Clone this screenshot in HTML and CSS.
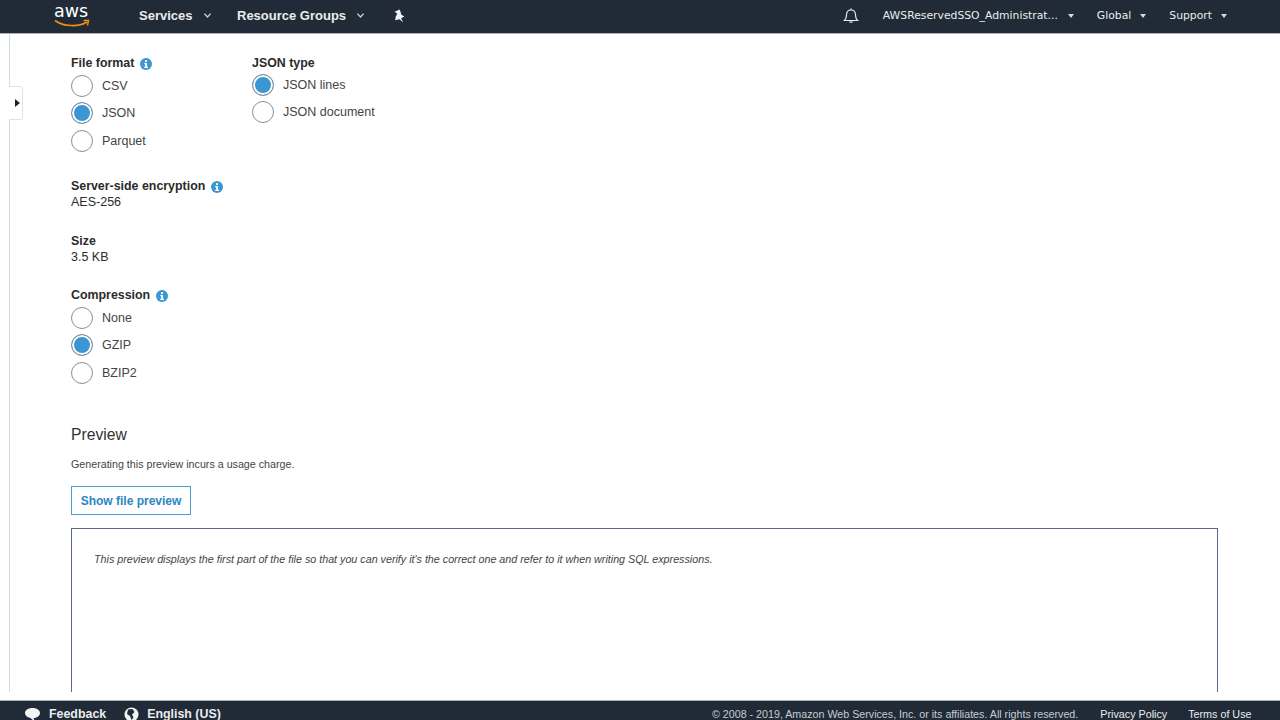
FILE: index.html
```html
<!DOCTYPE html>
<html lang="en">
<head>
<meta charset="utf-8">
<title>S3 Select</title>
<link rel="stylesheet" href="styles.css">
</head>
<body>
<header class="topbar">
  <nav class="nav-left">
    <div class="logo">
      <span class="logo-text">aws</span>
      <svg class="smile" width="36" height="9" viewBox="0 0 36 9"><path d="M1 1.500C9 7.500 24 8.500 33 3" fill="none" stroke="#f29111" stroke-width="1.600"/><path d="M29.500 1.500L34.500 1.500L33.500 6.500" fill="none" stroke="#f29111" stroke-width="1.400"/></svg>
    </div>
    <span class="nav-item nav-services">Services<svg class="caret" width="7" height="5" viewBox="0 0 7 5"><path d="M.4.7L3.500 4L6.600.7" fill="none" stroke="#c9ced3" stroke-width="1.300"/></svg></span>
    <span class="nav-item nav-groups">Resource Groups<svg class="caret" width="7" height="5" viewBox="0 0 7 5"><path d="M.4.7L3.500 4L6.600.7" fill="none" stroke="#c9ced3" stroke-width="1.300"/></svg></span>
    <svg class="pin" width="13" height="14" viewBox="0 0 12 13"><path d="M1.500 2.500L6 .5L7 2.500L7.500 5L10.500 7L7.500 8.500L9.500 12.500L6 9.500L2 10.500L2.500 7L4 4.500Z" fill="#f2f3f3"/></svg>
  </nav>
  <nav class="nav-right">
    <svg class="bell" width="16" height="16" viewBox="0 0 16 16"><path d="M1.500 12.500C3 11 3.500 9.500 3.500 7C3.500 4 5 2 8 2C11 2 12.500 4 12.500 7C12.500 9.500 13 11 14.500 12.500Z" fill="none" stroke="#eaeded" stroke-width="1.200"/><path d="M6 13.500C6.300 15.300 9.700 15.300 10 13.500Z" fill="#eaeded"/><path d="M8 .5V2" stroke="#eaeded" stroke-width="1.200"/></svg>
    <span class="nav-small account">AWSReservedSSO_Administrat...<i class="tri"></i></span>
    <span class="nav-small region">Global<i class="tri"></i></span>
    <span class="nav-small support">Support<i class="tri"></i></span>
  </nav>
</header>

<div class="body-row">
  <aside class="rail">
    <div class="rail-tab"><i class="rail-arrow"></i></div>
  </aside>
  <main class="content">
    <div class="format-row">
      <section class="format-col">
        <h4 class="label">File format <svg class="info" viewBox="0 0 12 12"><circle cx="6" cy="6" r="6" fill="#3b97d3"/><rect x="5" y="2.200" width="2" height="1.800" fill="#fff"/><path d="M4.200 5H7V8.800H8V10H4.200V8.800H5.200V6.200H4.200Z" fill="#fff"/></svg></h4>
        <div class="radio-row"><span class="radio"></span>CSV</div>
        <div class="radio-row"><span class="radio on"></span>JSON</div>
        <div class="radio-row"><span class="radio"></span>Parquet</div>
      </section>
      <section class="json-col">
        <h4 class="label">JSON type</h4>
        <div class="radio-row"><span class="radio on"></span>JSON lines</div>
        <div class="radio-row"><span class="radio"></span>JSON document</div>
      </section>
    </div>

    <section class="field sse">
      <h4 class="label">Server-side encryption <svg class="info" viewBox="0 0 12 12"><circle cx="6" cy="6" r="6" fill="#3b97d3"/><rect x="5" y="2.200" width="2" height="1.800" fill="#fff"/><path d="M4.200 5H7V8.800H8V10H4.200V8.800H5.200V6.200H4.200Z" fill="#fff"/></svg></h4>
      <p class="value">AES-256</p>
    </section>
    <section class="field size">
      <h4 class="label">Size</h4>
      <p class="value">3.5 KB</p>
    </section>
    <section class="field compression">
      <h4 class="label">Compression <svg class="info" viewBox="0 0 12 12"><circle cx="6" cy="6" r="6" fill="#3b97d3"/><rect x="5" y="2.200" width="2" height="1.800" fill="#fff"/><path d="M4.200 5H7V8.800H8V10H4.200V8.800H5.200V6.200H4.200Z" fill="#fff"/></svg></h4>
      <div class="radio-row"><span class="radio"></span>None</div>
      <div class="radio-row"><span class="radio on"></span>GZIP</div>
      <div class="radio-row"><span class="radio"></span>BZIP2</div>
    </section>

    <h2 class="preview-title">Preview</h2>
    <p class="preview-note">Generating this preview incurs a usage charge.</p>
    <button class="preview-btn">Show file preview</button>
    <div class="preview-box">
      <p class="preview-text">This preview displays the first part of the file so that you can verify it's the correct one and refer to it when writing SQL expressions.</p>
    </div>
  </main>
</div>

<footer class="footer">
  <div class="foot-left">
    <span class="foot-link feedback"><svg class="foot-icon" width="17" height="15" viewBox="0 0 17 15"><path d="M8.500 1C13 1 16 3.200 16 6C16 8.800 13 11 9.500 11L11 14.500L6 10.800C3 10.300 1 8.400 1 6C1 3.200 4 1 8.500 1Z" fill="#f2f3f3"/></svg>Feedback</span>
    <span class="foot-link lang"><svg class="foot-icon" width="15" height="15" viewBox="0 0 15 15"><circle cx="7.500" cy="7.500" r="7" fill="#f2f3f3"/><path d="M4 2.500L8.500 2L10.500 5L8 7.500L9.500 10.500L7.500 13L6 9L3 7Z" fill="#202b37"/></svg>English (US)</span>
  </div>
  <div class="foot-right">
    <span class="copy">© 2008 - 2019, Amazon Web Services, Inc. or its affiliates. All rights reserved.</span>
    <span class="legal privacy">Privacy Policy</span>
    <span class="legal">Terms of Use</span>
  </div>
</footer>
</body>
</html>
```
FILE: styles.css
```css
* { box-sizing: border-box; }
html, body { margin: 0; height: 720px; overflow: hidden; }
body {
  display: flex;
  flex-direction: column;
  background: #fff;
  color: #333;
  font-family: "Liberation Sans", Arial, sans-serif;
  font-size: 12.500px;
}

/* top bar */
.topbar {
  flex: 0 0 34px;
  display: flex;
  align-items: center;
  justify-content: space-between;
  padding-bottom: 2px;
  background: #202b37;
  border-bottom: 1px solid #a9b0b8;
  color: #eaeded;
}
.logo {
  flex: none;
  width: 36px;
  height: 30px;
  margin-right: 49px;
}
.logo-text {
  display: block;
  font-family: "DejaVu Sans", Verdana, sans-serif;
  font-size: 17.500px;
  font-weight: normal;
  line-height: 20px;
  color: #fff;
}
.smile { display: block; margin-top: -2px; }
.nav-left {
  display: flex;
  align-items: center;
  padding-left: 54px;
  font-weight: bold;
  font-size: 13px;
}
.nav-item { display: flex; align-items: center; white-space: nowrap; }
.caret { margin-left: 11px; }
.nav-services { margin-right: 26.500px; }
.nav-groups { margin-right: 29px; }
.pin { display: block; }
.nav-right { display: flex; align-items: center; padding-right: 53px; }
.bell { margin-right: 24px; }
.nav-small {
  display: flex;
  align-items: center;
  font-family: "DejaVu Sans", Verdana, sans-serif;
  font-size: 10.800px;
  white-space: nowrap;
}
.tri {
  width: 0;
  height: 0;
  margin-left: 9px;
  border: 3px solid transparent;
  border-top: 4px solid #d5dbdb;
  border-bottom: 0;
}
.account .tri { margin-left: 10px; }
.account { margin-right: 23px; }
.region { margin-right: 23px; }

/* body */
.body-row {
  flex: none;
  height: 658px;
  display: flex;
  overflow: hidden;
}
.rail {
  position: relative;
  flex: 0 0 10px;
  margin-left: 9px;
  border-left: 1px solid #d5dbdb;
}
.rail-tab {
  position: absolute;
  left: -1px;
  top: 52px;
  width: 14px;
  height: 34px;
  display: flex;
  align-items: center;
  padding-left: 6px;
  background: #fff;
  border: 1px solid #e1e4e6;
  border-left: 0;
  border-radius: 0 3px 3px 0;
}
.rail-arrow {
  width: 0;
  height: 0;
  border: 4px solid transparent;
  border-left: 5px solid #222;
  border-right: 0;
}
.content { flex: 1; padding: 22px 62px 0 52px; }

.label {
  margin: 0;
  font-size: 12.400px;
  line-height: 15px;
  font-weight: bold;
  color: #2b2b2b;
  display: flex;
  align-items: center;
  gap: 6px;
}
.info { width: 12px; height: 12px; flex: none; }
.format-row { display: flex; height: 120px; }
.format-col { width: 181px; }
.json-col { flex: 1; }
.radio-row {
  display: flex;
  align-items: center;
  gap: 9px;
  height: 27.600px;
  color: #444;
}
.format-col .label { margin-bottom: 1px; }
.json-col .radio-row { height: 27.500px; }
.radio {
  flex: none;
  width: 22px;
  height: 22px;
  border-radius: 50%;
  border: 1px solid #8a8f94;
  background: #fff;
}
.radio.on {
  background: #3b97d3;
  box-shadow: inset 0 0 0 2px #fff;
}
.value { margin: 1px 0 0; line-height: 15px; color: #2b2b2b; }
.sse { margin-top: 3px; height: 55px; }
.size { height: 54px; }
.compression .label { margin-bottom: 1px; }
.compression { height: 104px; }
.compression .radio-row { height: 27.500px; }

.preview-title {
  margin: 33px 0 0;
  font-size: 15.700px;
  line-height: 20px;
  font-weight: normal;
  color: #333;
}
.preview-note {
  margin: 12px 0 0;
  font-size: 10.700px;
  line-height: 14px;
  color: #444;
}
.preview-btn {
  display: block;
  width: 120px;
  height: 29px;
  margin-top: 15px;
  padding: 0;
  background: #fff;
  border: 1px solid #4a9fd0;
  color: #2b86c2;
  font: bold 12px "Liberation Sans", Arial, sans-serif;
}
.preview-box {
  height: 240px;
  margin-top: 13px;
  padding: 23px 22px;
  border: 1px solid #5b6b85;
  border-bottom: 0;
}
.preview-text {
  margin: 0;
  font-style: italic;
  font-size: 10.720px;
  line-height: 14px;
  color: #444;
}

/* footer */
.footer {
  margin-top: 8px;
  flex: 1;
  min-height: 0;
  overflow: hidden;
  display: flex;
  justify-content: space-between;
  align-items: flex-start;
  padding: 7px 28.500px 0 24px;
  background: #202b37;
  border-top: 1px solid #a9b0b8;
  color: #eaeded;
  line-height: 12px;
  white-space: nowrap;
}
.foot-left, .foot-right { display: flex; align-items: center; height: 12px; }
.foot-link { display: flex; align-items: center; gap: 8px; font-weight: bold; font-size: 12.400px; }
.feedback { margin-right: 18px; }
.copy { font-size: 10.700px; color: #c7ccd1; margin-right: 22px; }
.legal { font-size: 10.750px; }
.privacy { margin-right: 21px; }
```
